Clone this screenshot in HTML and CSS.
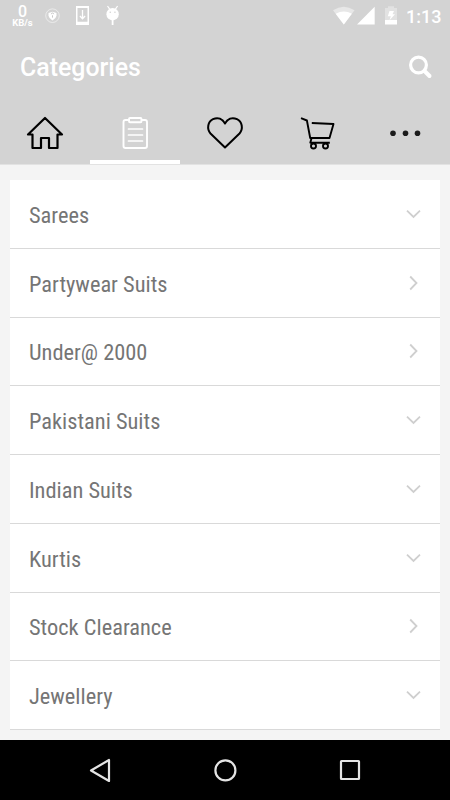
FILE: index.html
```html
<!DOCTYPE html>
<html lang="en">
<head>
<meta charset="utf-8">
<title>Categories</title>
<link rel="stylesheet" href="styles.css">
</head>
<body>
<header class="header">
  <div class="status">
    <div class="speed"><span class="speed-value">0</span><span class="speed-unit">KB/s</span></div>
    <svg class="status-left" width="80" height="30" viewBox="40 0 80 30" fill="none">
      <circle cx="52.5" cy="15.7" r="6.8" stroke="#fff" stroke-opacity=".65" stroke-width=".8"/>
      <path d="M48.500 13 52.500 11.700 56.500 13v2.700q-.5 3-4 4.800-3.500-1.800-4-4.800z" fill="#fff"/>
      <path d="M52.500 17.600v-2.300M51.300 14.200a1.200 1.200 0 1 1 2.400 0" stroke="#c8c8c8" stroke-width="1"/>
      <path fill="#fff" fill-rule="evenodd" d="M76 6h13v19H76zM77.500 8v13.700h10V8z"/>
      <path d="M82.500 10v8M79.900 16l2.600 2.700 2.600-2.700" stroke="#fff" stroke-width="1.300"/>
      <circle cx="112.600" cy="14.200" r="6.200" fill="#fff"/>
      <path d="M107.500 6l2.200 3.200M117.600 6l-2.200 3.200" stroke="#fff" stroke-width="1.200"/>
      <path d="M112.600 20v5" stroke="#fff" stroke-width="1.800"/>
      <path d="M109.700 12.200h1.100M114.400 12.200h1.100" stroke="#bbb"/>
    </svg>
    <svg class="status-right" width="70" height="30" viewBox="330 0 70 30" fill="none">
      <path d="M333 10.300Q343.800 3 354.500 10.300L343.800 24.500z" fill="#e7e7e7"/>
      <path d="M335.700 13.800Q343.800 9.200 351.900 13.800L343.800 24.500z" fill="#fff"/>
      <path d="M357 24.500h17.700V6.800z" fill="#fff"/>
      <path d="M385 8h3V6.200h6V8h3v12h-12z" fill="#e2e2e2"/>
      <path d="M385 20h12v4.500h-12z" fill="#fff"/>
      <path d="M389.500 11h4.500l-1.500 3.200h2.500l-5.500 6 1.300-4h-3z" fill="#fff"/>
    </svg>
    <span class="time">1:13</span>
  </div>
  <div class="titlebar">
    <h1 class="title">Categories</h1>
    <svg class="search" width="26" height="26" viewBox="408 54 26 26" fill="none" stroke="#fff">
      <circle cx="418.500" cy="65" r="7.900" stroke-width="3.200"/>
      <path d="M424.500 71l5 5" stroke-width="4" stroke-linecap="round"/>
    </svg>
  </div>
  <nav class="tabs">
    <a class="tab"><svg width="90" height="64" viewBox="0 100 90 64" fill="none" stroke="#000" stroke-width="2.200" stroke-linejoin="round">
      <path d="M45 118 28 134.500H32.500V148H41V138H49V148H57.500V134.500H62z"/></svg></a>
    <a class="tab tab-active"><svg width="90" height="64" viewBox="90 100 90 64" fill="none" stroke="#fff" stroke-width="1.900" stroke-linejoin="round" stroke-linecap="round">
      <path d="M129 120h-3.500q-2 0-2 2v24q0 2 2 2h19.500q2 0 2-2v-24q0-2-2-2h-3.500"/>
      <rect x="129" y="118" width="12.500" height="4.300" rx="1"/>
      <path d="M128.500 129h14M128.500 135h14M128.500 141h14" stroke-width="1.700"/></svg></a>
    <a class="tab"><svg width="90" height="64" viewBox="180 100 90 64" fill="none" stroke="#000" stroke-width="2" stroke-linejoin="round">
      <path d="M225 147.500 210.500 133.500C206.500 129 207.800 121.500 213 119.200C218 117 222.500 118.800 225 123.500C227.500 118.800 232 117 237 119.200C242.200 121.500 243.500 129 239.500 133.500z"/></svg></a>
    <a class="tab"><svg width="90" height="64" viewBox="270 100 90 64" fill="none" stroke="#000" stroke-width="1.900" stroke-linejoin="round">
      <path d="M301 118.200l5.900 2.300 3.300 17.500h19.300L333.500 124l-21.700-1M311.500 138.300l-1.200 4.400h19.500"/>
      <circle cx="313.500" cy="146" r="2.500"/><circle cx="325.500" cy="146" r="2.500"/></svg></a>
    <a class="tab"><svg width="90" height="64" viewBox="360 100 90 64" fill="#1b1b1b">
      <circle cx="393" cy="133.300" r="2.800"/><circle cx="405.500" cy="133.300" r="2.800"/><circle cx="417.500" cy="133.300" r="2.800"/></svg></a>
  </nav>
</header>
<main class="content">
  <ul class="list">
    <li class="row"><span class="label">Sarees</span><svg class="chevron" viewBox="0 0 16 16"><path d="M2 4.700 8.500 11 15 4.700"/></svg></li>
    <li class="row"><span class="label">Partywear Suits</span><svg class="chevron" viewBox="0 0 16 16"><path d="M5.200 1.500 11.500 8l-6.300 6.500"/></svg></li>
    <li class="row"><span class="label">Under@ 2000</span><svg class="chevron" viewBox="0 0 16 16"><path d="M5.200 1.500 11.500 8l-6.300 6.500"/></svg></li>
    <li class="row"><span class="label">Pakistani Suits</span><svg class="chevron" viewBox="0 0 16 16"><path d="M2 4.700 8.500 11 15 4.700"/></svg></li>
    <li class="row"><span class="label">Indian Suits</span><svg class="chevron" viewBox="0 0 16 16"><path d="M2 4.700 8.500 11 15 4.700"/></svg></li>
    <li class="row"><span class="label">Kurtis</span><svg class="chevron" viewBox="0 0 16 16"><path d="M2 4.700 8.500 11 15 4.700"/></svg></li>
    <li class="row"><span class="label">Stock Clearance</span><svg class="chevron" viewBox="0 0 16 16"><path d="M5.200 1.500 11.500 8l-6.300 6.500"/></svg></li>
    <li class="row"><span class="label">Jewellery</span><svg class="chevron" viewBox="0 0 16 16"><path d="M2 4.700 8.500 11 15 4.700"/></svg></li>
  </ul>
</main>
<footer class="navbar">
  <svg width="24" height="24" viewBox="88 758 24 24"><path d="M109 760v21L91 770.500z"/></svg>
  <svg width="24" height="24" viewBox="213 758 24 24"><circle cx="225.400" cy="770.400" r="10"/></svg>
  <svg width="24" height="24" viewBox="338 758 24 24"><rect x="341" y="761" width="18" height="18" rx=".5"/></svg>
</footer>
</body>
</html>
```
FILE: styles.css
```css
* { box-sizing: border-box; }
body {
  margin: 0;
  width: 450px;
  height: 800px;
  display: flex;
  flex-direction: column;
  overflow: hidden;
  background: #f4f4f4;
  font-family: Roboto, "Liberation Sans", sans-serif;
}
.header { height: 165px; background: #d3d3d3; color: #fff; border-bottom: 1px solid #e2e2e2; }
.status { display: flex; height: 30px; }
.speed {
  width: 40px;
  padding: 3px 0 0 5px;
  display: flex;
  flex-direction: column;
  align-items: center;
  font-weight: 700;
}
.speed-value { font-size: 16px; line-height: 17px; font-weight: 500; }
.speed-unit { font-size: 9.500px; line-height: 6px; }
.status-right { margin-left: 210px; }
.time { margin-left: 6px; font-size: 18px; line-height: 33px; font-weight: 500; white-space: nowrap; }
.titlebar {
  display: flex;
  align-items: center;
  justify-content: space-between;
  height: 70px;
  padding: 4px 16px 0 20px;
}
.title { margin: 2px 0 0; font-size: 24.900px; font-weight: 500; line-height: 30px; }
.tabs { display: grid; grid-template-columns: repeat(5, 1fr); height: 64px; }
.tab { display: block; height: 64px; }
.tab svg { display: block; }
.tab-active { box-shadow: inset 0 -4px #fff; }
.content { flex: 1; padding: 15px 10px 0; }
.list { margin: 0; padding: 0; list-style: none; background: #fff; }
.row {
  display: flex;
  align-items: center;
  justify-content: space-between;
  height: 68.75px;
  padding: 2px 19px 0 19px;
  border-bottom: 1px solid #d9d9d9;
}
.label {
  color: #757575;
  font-family: "Roboto Condensed", Roboto, sans-serif;
  font-stretch: 75%;
  font-size: 22.400px;
  line-height: 30px;
  white-space: nowrap;
}
.chevron { width: 16px; height: 16px; margin-top: -2px; fill: none; stroke: #cfcfcf; stroke-width: 1.800; }
.navbar {
  height: 60px;
  padding: 0 88px;
  display: flex;
  align-items: center;
  justify-content: space-between;
  background: #000;
}
.navbar svg { fill: none; stroke: #e4e4e4; stroke-width: 2.200; stroke-linejoin: round; }
```
